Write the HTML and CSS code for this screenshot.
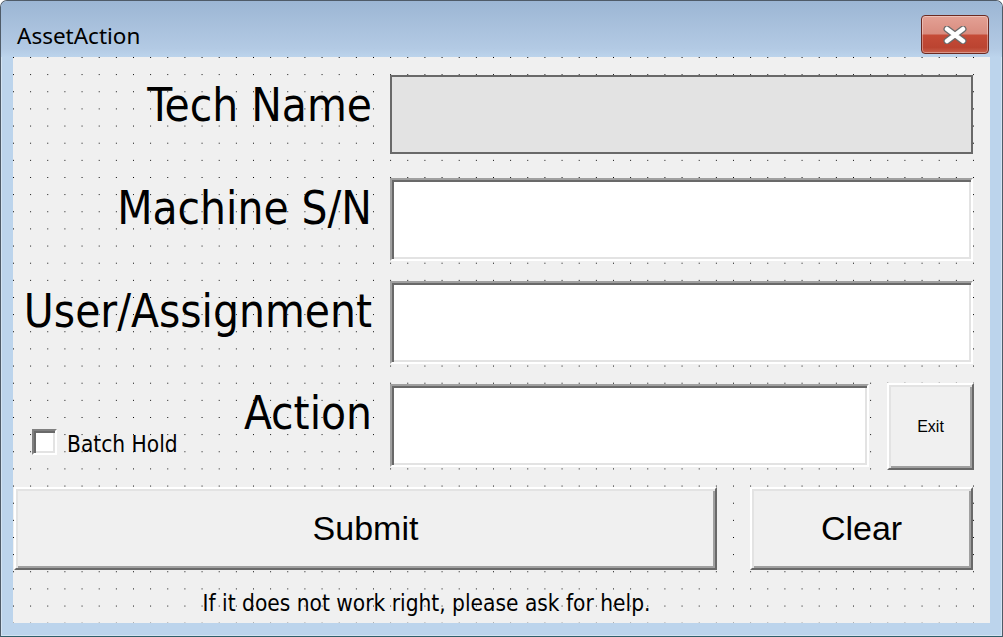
FILE: index.html
```html
<!DOCTYPE html>
<html>
<head>
<meta charset="utf-8">
<link rel="stylesheet" href="styles.css">
</head>
<body>
<div class="window">
  <div class="titlebar">
    <span class="title">AssetAction</span>
    <div class="close">
      <svg width="24" height="18" viewBox="0 0 24 18">
        <path d="M4 3 L20 15 M4 15 L20 3" stroke="#6a6a6a" stroke-width="7" stroke-linecap="round"/>
        <path d="M4 3 L20 15 M4 15 L20 3" stroke="#ffffff" stroke-width="4.5" stroke-linecap="round"/>
      </svg>
    </div>
  </div>
  <div class="client">
    <svg class="dots" width="977" height="566">
      <defs>
        <pattern id="grid" width="17.143" height="17.143" patternUnits="userSpaceOnUse">
          <rect x="0" y="0" width="1" height="1" fill="#000" shape-rendering="crispEdges"/>
        </pattern>
      </defs>
      <rect width="977" height="566" fill="url(#grid)"/>
    </svg>
    <div class="form">
      <div class="row row1">
        <div class="label-cell"><span class="label">Tech Name</span></div>
        <div class="field disabled"></div>
      </div>
      <div class="row row2">
        <div class="label-cell"><span class="label">Machine S/N</span></div>
        <div class="field"></div>
      </div>
      <div class="row row3">
        <div class="label-cell"><span class="label">User/Assignment</span></div>
        <div class="field"></div>
      </div>
      <div class="row row4">
        <div class="label-cell action-cell">
          <div class="check"><span class="box"></span><span class="check-text">Batch Hold</span></div>
          <span class="label">Action</span>
        </div>
        <div class="field action-field"></div>
        <div class="btn exit">Exit</div>
      </div>
      <div class="buttons">
        <div class="btn submit">Submit</div>
        <div class="btn clear">Clear</div>
      </div>
      <div class="help">If it does not work right, please ask for help.</div>
    </div>
  </div>
</div>
</body>
</html>
```
FILE: styles.css
```css
html, body {
  margin: 0;
  padding: 0;
  background: #ffffff;
}

.window {
  width: 1003px;
  height: 637px;
  box-sizing: border-box;
  border: 1px solid #4f5b68;
  border-bottom-color: #2f5f6a;
  border-radius: 7px 7px 0 0;
  background: #bcd4ec;
  padding: 0 11px 12px 11px;
  display: flex;
  flex-direction: column;
  overflow: hidden;
  box-shadow: inset 0 0 0 1px rgba(255,255,255,0.35);
}

.titlebar {
  height: 56px;
  margin: 0 -11px;
  padding: 0 13px 0 16px;
  display: flex;
  justify-content: space-between;
  align-items: flex-start;
  background: linear-gradient(#9cb6d4, #b3cae4 85%, #bcd4ec);
}

.title {
  font-family: "Noto Sans", "Open Sans", sans-serif;
  font-size: 22.5px;
  line-height: 22px;
  color: #000;
  margin-top: 24px;
}

.close {
  margin-top: 14px;
  width: 68px;
  height: 39px;
  box-sizing: border-box;
  border: 1px solid #6b2a22;
  border-radius: 4px;
  background: linear-gradient(#e3a195 0%, #d98c7f 48%, #c54b37 52%, #bb4431 85%, #c8604c 100%);
  box-shadow: inset 0 0 0 1px rgba(255,255,255,0.35);
  display: flex;
  align-items: center;
  justify-content: center;
}

.client {
  position: relative;
  width: 977px;
  height: 566px;
  background: #f0f0f0;
  margin-left: 1px;
}

.dots {
  position: absolute;
  left: 0;
  top: 0;
  z-index: 0;
}

.form {
  position: relative;
  z-index: 1;
  padding-top: 18px;
  display: flex;
  flex-direction: column;
}

.row {
  display: flex;
  align-items: flex-start;
}

.row1 { height: 79px; }
.row2 { height: 83px; margin-top: 24px; }
.row3 { height: 83px; margin-top: 20px; }
.row4 { height: 87px; margin-top: 19px; }

.label-cell {
  width: 360px;
  margin-right: 17px;
  display: flex;
  justify-content: flex-end;
  flex-shrink: 0;
}

.label {
  font-family: "DejaVu Sans Condensed", "DejaVu Sans", sans-serif;
  font-stretch: condensed;
  font-size: 45.5px;
  line-height: 46px;
  padding-top: 8px;
  padding-right: 1px;
  color: #000;
  white-space: nowrap;
}

.field {
  width: 583px;
  height: 83px;
  box-sizing: border-box;
  background: #ffffff;
  border: 2px solid;
  border-color: #a0a0a0 #ffffff #ffffff #a0a0a0;
  box-shadow: inset 2px 2px 0 #696969, inset -2px -2px 0 #e3e3e3;
}

.field.disabled {
  height: 79px;
  background: #e3e3e3;
  border: 2px solid #696969;
  box-shadow: none;
}

.action-cell {
  justify-content: space-between;
}

.action-field {
  width: 479px;
  margin-top: 1px;
  flex-shrink: 0;
}

.check {
  display: flex;
  align-items: flex-start;
  margin-left: 19px;
  margin-top: 46px;
}

.box {
  width: 25px;
  height: 26px;
  box-sizing: border-box;
  background: #ffffff;
  border: 2px solid;
  border-color: #808080 #ffffff #ffffff #808080;
  box-shadow: inset 2px 2px 0 #696969, inset -2px -2px 0 #e3e3e3;
}

.check-text {
  font-family: "DejaVu Sans Condensed", "DejaVu Sans", sans-serif;
  font-stretch: condensed;
  font-size: 22.5px;
  line-height: 24px;
  margin-left: 10px;
  margin-top: 3px;
  color: #000;
}

.btn {
  box-sizing: border-box;
  background: #f0f0f0;
  border: 2px solid;
  border-color: #ffffff #696969 #696969 #ffffff;
  box-shadow: inset 2px 2px 0 #e3e3e3, inset -2px -2px 0 #a0a0a0;
  display: flex;
  align-items: center;
  justify-content: center;
  font-family: "Liberation Sans", Arial, sans-serif;
  color: #000;
}

.exit {
  width: 87px;
  height: 87px;
  margin-left: 18px;
  font-size: 16px;
  flex-shrink: 0;
}

.buttons {
  display: flex;
  margin-top: 17px;
  margin-left: 1px;
}

.submit {
  width: 703px;
  height: 83px;
  font-size: 34px;
}

.clear {
  width: 223px;
  height: 83px;
  margin-left: 33px;
  font-size: 34px;
}

.help {
  width: 827px;
  margin-top: 21px;
  text-align: center;
  font-family: "DejaVu Sans Condensed", "DejaVu Sans", sans-serif;
  font-stretch: condensed;
  font-size: 22.5px;
  line-height: 24px;
  color: #000;
}
```
